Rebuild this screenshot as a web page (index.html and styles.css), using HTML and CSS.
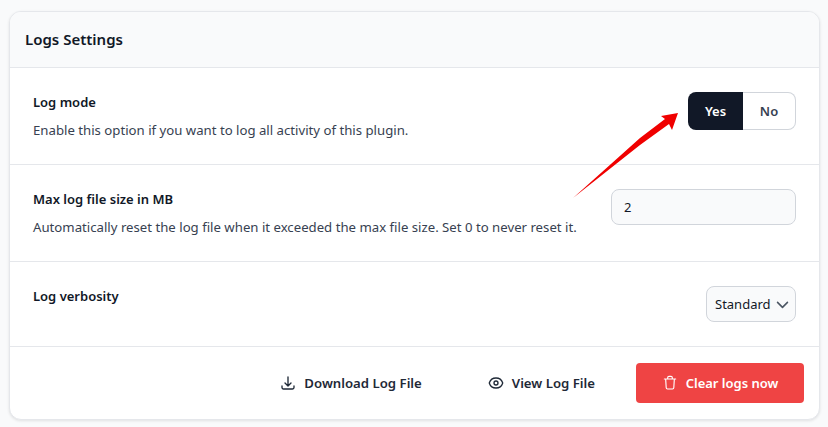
FILE: index.html
```html
<!DOCTYPE html>
<html lang="en">

<head>
    <meta charset="UTF-8">
    <title>Logs Settings</title>
    <link rel="stylesheet" href="styles.css">
</head>

<body>
    <div class="card">
        <div class="card-header">Logs Settings</div>

        <div class="row">
            <div class="row-text">
                <div class="row-title">Log mode</div>
                <div class="row-desc">Enable this option if you want to log all activity of this plugin.</div>
            </div>
            <div class="toggle">
                <span class="toggle-btn active">Yes</span>
                <span class="toggle-btn">No</span>
            </div>
        </div>

        <div class="row">
            <div class="row-text">
                <div class="row-title">Max log file size in MB</div>
                <div class="row-desc">Automatically reset the log file when it exceeded the max file size. Set 0 to never reset it.</div>
            </div>
            <input class="text-input" type="text" value="2">
        </div>

        <div class="row row-short">
            <div class="row-text">
                <div class="row-title">Log verbosity</div>
            </div>
            <div class="select">
                Standard
                <svg width="17" height="17" viewBox="0 0 24 24" fill="none" stroke="#4b5563" stroke-width="2.2" stroke-linecap="round" stroke-linejoin="round"><path d="M5 9l7 7 7-7"/></svg>
            </div>
        </div>

        <div class="card-footer">
            <a class="link-btn">
                <svg width="16" height="16" viewBox="0 0 24 24" fill="none" stroke="currentColor" stroke-width="2" stroke-linecap="round" stroke-linejoin="round"><path d="M3 16.5v2.25A2.25 2.25 0 0 0 5.25 21h13.5A2.25 2.25 0 0 0 21 18.75V16.5M16.5 12 12 16.5m0 0L7.5 12m4.500 4.500V3"/></svg>
                Download Log File
            </a>
            <a class="link-btn">
                <svg width="16" height="16" viewBox="0 0 24 24" fill="none" stroke="currentColor" stroke-width="2" stroke-linecap="round" stroke-linejoin="round"><path d="M2.04 12.32a1 1 0 0 1 0-.64C3.42 7.51 7.36 4.5 12 4.500c4.640 0 8.570 3.010 9.960 7.180.07.210.07.430 0 .640C20.580 16.490 16.640 19.500 12 19.500c-4.640 0-8.570-3.010-9.960-7.180z"/><path d="M15 12a3 3 0 1 1-6 0 3 3 0 0 1 6 0z"/></svg>
                View Log File
            </a>
            <a class="danger-btn">
                <svg width="16" height="16" viewBox="0 0 24 24" fill="none" stroke="currentColor" stroke-width="1.7" stroke-linecap="round" stroke-linejoin="round"><path d="M3.500 6h17M8.500 6V4a2 2 0 0 1 2-2h3a2 2 0 0 1 2 2v2M5.500 6l.8 13.200A2 2 0 0 0 8.300 21h7.400a2 2 0 0 0 2-1.800L18.500 6"/></svg>
                Clear logs now
            </a>
        </div>
    </div>

    <!-- annotation drawn over the screenshot -->
    <svg class="arrow" width="120" height="100" viewBox="0 0 120 100">
        <path d="M1 87 L68 27 L93 8 L89 5 L106 2 L100 19 L97 13 L68 34 Z" fill="#f00000"/>
    </svg>
</body>

</html>
```

FILE: styles.css
```css
* {
    box-sizing: border-box;
}

body {
    margin: 0;
    height: 427px;
    padding: 11px 8px 7px 9px;
    font-family: "Noto Sans", "Open Sans", sans-serif;
    background-color: #f9fafb;
    color: #111827;
    position: relative;
    overflow: hidden;
}

.card {
    background-color: #fff;
    border: 1px solid #e5e7eb;
    border-radius: 12px;
    box-shadow: 0 1px 3px rgba(0, 0, 0, 0.1);
    height: 409px;
    overflow: hidden;
}

.card-header {
    height: 56px;
    padding: 0 15px 2px;
    display: flex;
    align-items: center;
    background-color: #f9fafb;
    border-bottom: 1px solid #e5e7eb;
    font-size: 15px;
    font-weight: 600;
}

.row {
    height: 97px;
    padding: 24px 23px;
    display: flex;
    justify-content: space-between;
    align-items: flex-start;
    border-bottom: 1px solid #e5e7eb;
}

.row-short {
    height: 85px;
}

.row-text {
    flex: 1;
}

.row-title {
    font-size: 13px;
    font-weight: 600;
    line-height: 20px;
}

.row-desc {
    margin-top: 8px;
    font-size: 13.2px;
    line-height: 20px;
    color: #374151;
}

.toggle {
    display: flex;
    width: 108px;
    height: 38px;
    font-size: 13px;
    font-weight: 600;
}

.toggle-btn {
    display: flex;
    align-items: center;
    justify-content: center;
    flex: 1;
    border: 1px solid #d1d5db;
    border-left: none;
    border-radius: 0 8px 8px 0;
    color: #374151;
}

.toggle-btn.active {
    flex: 0 0 55px;
    background-color: #111827;
    border: none;
    border-radius: 8px 0 0 8px;
    color: #fff;
}

.text-input {
    width: 185px;
    height: 36px;
    padding: 0 12px;
    background-color: #f9fafb;
    border: 1px solid #d1d5db;
    border-radius: 8px;
    font-family: inherit;
    font-size: 13px;
    color: #111827;
}

.select {
    display: flex;
    align-items: center;
    justify-content: space-between;
    width: 90px;
    height: 36px;
    padding: 0 4px 0 8px;
    background-color: #f9fafb;
    border: 1px solid #d1d5db;
    border-radius: 8px;
    font-size: 13px;
}

.card-footer {
    height: 72px;
    padding: 0 15px 0 0;
    display: flex;
    justify-content: flex-end;
    align-items: center;
    gap: 16px;
}

.link-btn,
.danger-btn {
    display: flex;
    align-items: center;
    justify-content: center;
    gap: 8px;
    height: 40px;
    font-size: 13px;
    font-weight: 600;
}

.link-btn {
    padding: 0 25px;
    font-size: 13.2px;
    color: #1f2937;
}

.danger-btn {
    width: 168px;
    background-color: #ef4444;
    border-radius: 4px;
    color: #fff;
}

.arrow {
    position: absolute;
    left: 572px;
    top: 111px;
}
```
